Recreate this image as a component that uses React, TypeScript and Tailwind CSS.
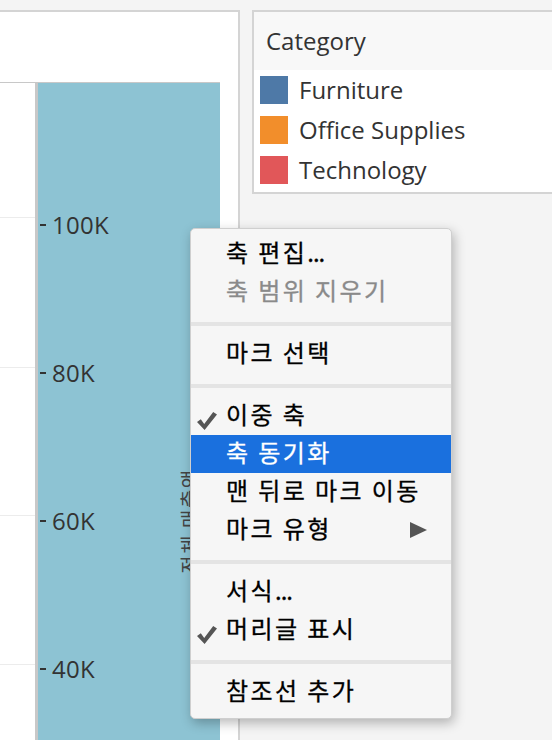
import React from "react";

const ko = { fontFamily: '"Noto Sans CJK KR", "Noto Sans", sans-serif' };
const lat = { fontFamily: '"Open Sans", Lato, sans-serif' };

const ticks = ["100K", "80K", "60K", "40K"];

const legend = [
  { label: "Furniture", color: "bg-[#4e79a7]" },
  { label: "Office Supplies", color: "bg-[#f28e2b]" },
  { label: "Technology", color: "bg-[#e15759]" },
];

function Check() {
  return (
    <svg width="20" height="18" viewBox="0 0 20 18">
      <path d="M0 10 L3.8 7.2 L7.2 12 L16.2 0 L20 2.6 L7.6 18 Z" fill="#555" />
    </svg>
  );
}

type Item = { label: string; check?: boolean; disabled?: boolean; active?: boolean; sub?: boolean };

const groups: Item[][] = [
  [{ label: "축 편집..." }, { label: "축 범위 지우기", disabled: true }],
  [{ label: "마크 선택" }],
  [{ label: "이중 축", check: true }, { label: "축 동기화", active: true }, { label: "맨 뒤로 마크 이동" }, { label: "마크 유형", sub: true }],
  [{ label: "서식..." }, { label: "머리글 표시", check: true }],
  [{ label: "참조선 추가" }],
];

function MenuRow({ it }: { it: Item }) {
  const color = it.active ? "bg-[#1a70de] text-white" : it.disabled ? "text-[#8a8a8a]" : "text-black";
  const dots = it.label.endsWith("...");
  const base = dots ? it.label.slice(0, -3) : it.label;
  return (
    <div className={`flex h-[38px] items-center pr-[24px] ${color}`}>
      <div className="flex w-[35px] shrink-0 items-end self-stretch pb-[5px] pl-[6px]">{it.check && <Check />}</div>
      <span className="flex-1 text-[24px] leading-none tracking-[2.4px] -translate-y-[2px] [-webkit-text-stroke:0.3px_currentColor]" style={ko}>
        {base}
        {dots && <span className="tracking-[-1px]">...</span>}
      </span>
      {it.sub && (
        <svg width="17" height="16" viewBox="0 0 17 16">
          <path d="M0 0 L17 8 L0 16 Z" fill="#555" />
        </svg>
      )}
    </div>
  );
}

export default function App() {
  return (
    <div className="relative h-[740px] w-[552px] overflow-hidden bg-[#f4f4f4]">
      <div className="flex gap-[12px] pt-[10px]">
        {/* chart panel */}
        <div className="flex h-[730px] w-[240px] shrink-0 flex-col border-t-2 border-r-2 border-[#d4d4d4] bg-white">
          <div className="h-[70px] shrink-0" />
          <div className="flex flex-1">
            <div className="flex w-[35px] flex-col border-t border-[#c8c8c8]">
              <div className="mt-[134px] h-px bg-[#ececec]" />
              <div className="mt-[149px] h-px bg-[#ececec]" />
              <div className="mt-[147px] h-px bg-[#ececec]" />
              <div className="mt-[148px] h-px bg-[#ececec]" />
            </div>
            <div className="w-[3px] border-t border-[#c8c8c8] bg-[#c8c8c8]" />
            <div className="relative w-[182px] border-t border-[#c8c8c8] bg-[#8dc3d3]">
              <div className="flex flex-col gap-[120px] pt-[128px]">
                {ticks.map((t) => (
                  <div key={t} className="flex h-[28px] items-center gap-[6px] pl-[2px]">
                    <div className="h-[2px] w-[6px] bg-[#333]" />
                    <span className="text-[24px] leading-none tracking-[0.3px] text-[#333]" style={lat}>{t}</span>
                  </div>
                ))}
              </div>
              <div
                className="absolute left-[97px] top-[426px] flex h-[24px] w-[110px] -rotate-90 items-center justify-center whitespace-nowrap text-[20px] leading-none tracking-[1.5px] text-[#444]"
                style={ko}
              >
                전체 매출액
              </div>
            </div>
            <div className="flex-1 bg-white" />
          </div>
        </div>

        {/* legend */}
        <div className="flex h-[184px] flex-1 flex-col border-y-2 border-l-2 border-[#d4d4d4] bg-white">
          <div className="flex h-[58px] items-center bg-[#f8f8f8] pl-[12px]">
            <span className="text-[24px] leading-none text-[#333]" style={lat}>Category</span>
          </div>
          <div className="flex flex-col gap-[12px] pt-[6px] pl-[6px]">
            {legend.map((l) => (
              <div key={l.label} className="flex h-[28px] items-center gap-[11px]">
                <div className={`h-[28px] w-[28px] ${l.color}`} />
                <span className="text-[24px] leading-none text-[#333]" style={lat}>{l.label}</span>
              </div>
            ))}
          </div>
        </div>
      </div>

      {/* context menu */}
      <div className="absolute left-[190px] top-[228px] w-[262px] rounded-[5px] border border-[#cfcfcf] bg-[#f6f6f6] pt-[6px] pb-[7px] shadow-[2px_4px_12px_rgba(0,0,0,0.28)]">
        {groups.map((g, i) => (
          <div key={i}>
            {i > 0 && <div className="mt-[11px] mb-[9px] h-[4px] bg-[#e4e4e4]" />}
            {g.map((it) => (
              <MenuRow key={it.label} it={it} />
            ))}
          </div>
        ))}
      </div>
    </div>
  );
}
